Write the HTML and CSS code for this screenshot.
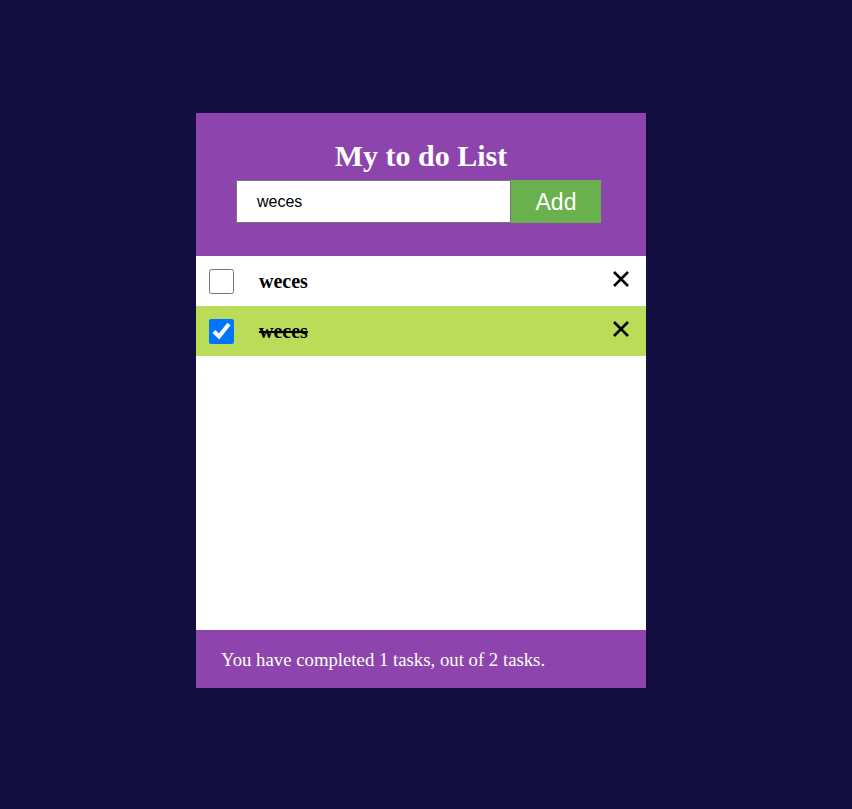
FILE: index.html
```html
<!DOCTYPE html>
<html>
<head>
<meta charset="utf-8">
<link rel="stylesheet" href="styles.css">
</head>
<body>
<div class="app">
  <header class="head">
    <h1 class="title">My to do List</h1>
    <div class="form">
      <input class="field" type="text" value="weces">
      <button class="add">Add</button>
    </div>
  </header>
  <ul class="list">
    <li class="item">
      <input class="check" type="checkbox">
      <span class="label">weces</span>
      <span class="del"><svg width="18" height="18" viewBox="0 0 18 18"><path d="M2 2L16 16M16 2L2 16" stroke="#000" stroke-width="2.6" stroke-linecap="butt"/></svg></span>
    </li>
    <li class="item done">
      <input class="check" type="checkbox" checked>
      <span class="label">weces</span>
      <span class="del"><svg width="18" height="18" viewBox="0 0 18 18"><path d="M2 2L16 16M16 2L2 16" stroke="#000" stroke-width="2.6" stroke-linecap="butt"/></svg></span>
    </li>
  </ul>
  <footer class="foot">You have completed 1 tasks, out of 2 tasks.</footer>
</div>
</body>
</html>
```
FILE: styles.css
```css
html, body { margin: 0; padding: 0; }
body {
  background: #120f40;
  height: 809px;
  font-family: "Liberation Serif", serif;
}
.app {
  width: 450px;
  margin: 113px auto 0;
  position: relative;
  left: -5px;
  background: #fff;
  display: flex;
  flex-direction: column;
}
.head {
  background: #8e44ad;
  height: 143px;
  box-sizing: border-box;
  padding-top: 26px;
  display: flex;
  flex-direction: column;
  align-items: center;
}
.title {
  margin: 0;
  color: #fff;
  font-size: 30px;
  font-weight: bold;
  line-height: 34px;
  height: 41px;
}
.form { display: flex; align-self: flex-start; margin-left: 40px; }
.field {
  width: 275px;
  height: 43px;
  box-sizing: border-box;
  border: 1px solid #777;
  padding: 0 0 0 20px;
  font-family: "Liberation Sans", sans-serif;
  font-size: 16px;
  color: #000;
  outline: none;
  margin: 0;
}
.add {
  width: 90px;
  height: 43px;
  margin: 0;
  border: none;
  background: #6ab04c;
  color: #fff;
  font-family: "Liberation Sans", sans-serif;
  font-size: 23px;
  padding: 0;
  border-top: 1px solid #6ab04c;
}
.list {
  list-style: none;
  margin: 0;
  padding: 0;
  height: 374px;
}
.item {
  height: 50px;
  display: flex;
  align-items: center;
  padding: 0 16px 0 13px;
}
.item.done { background: #badc58; }
.check {
  width: 25px;
  height: 25px;
  margin: 0;
}
.label {
  margin-left: 25px;
  font-size: 20px;
  font-weight: bold;
  flex: 1;
}
.done .label { text-decoration: line-through; }
.del { display: flex; width: 18px; height: 18px; margin-top: -4px; }
.foot {
  background: #8e44ad;
  height: 58px;
  box-sizing: border-box;
  padding: 19px 0 0 25px;
  color: #fff;
  font-size: 18.75px;
}
```
